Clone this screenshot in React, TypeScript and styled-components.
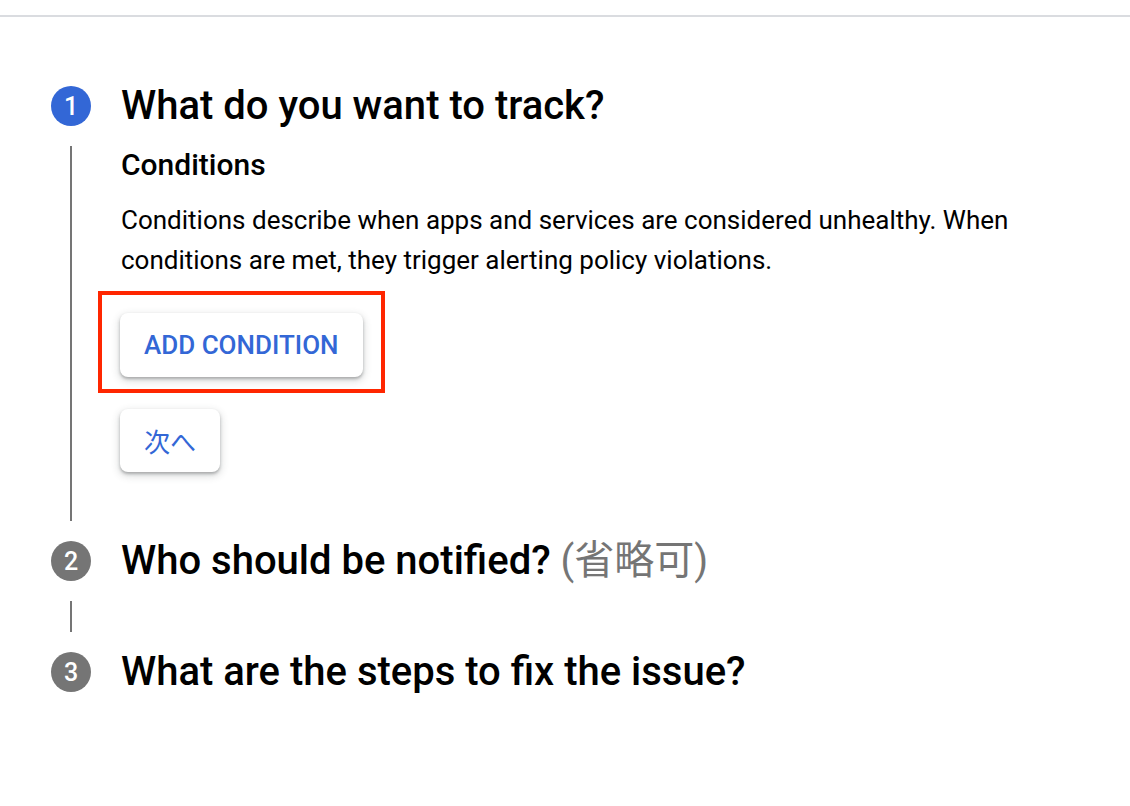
import React from "react";
import styled, { createGlobalStyle } from "styled-components";

const Global = createGlobalStyle`
  html, body { margin: 0; padding: 0; background: #ffffff; }
  body { font-family: Roboto, "Noto Sans CJK JP", "Liberation Sans", sans-serif; color: #000; }
`;

const Page = styled.div`
  width: 1130px;
  min-height: 806px;
  background: #fff;
`;

const TopBar = styled.div`
  height: 15px;
  border-bottom: 2px solid #dadce0;
`;

const Stepper = styled.div`
  display: flex;
  flex-direction: column;
  padding: 69px 0 0 51px;
`;

const Step = styled.div`
  display: grid;
  grid-template-columns: 40px 1fr;
  column-gap: 30px;
`;

const Circle = styled.div<{ $active?: boolean }>`
  width: 40px;
  height: 40px;
  border-radius: 50%;
  background: ${(p) => (p.$active ? "#3367d6" : "#757575")};
  color: #fff;
  font-size: 25px;
  font-weight: 500;
  display: flex;
  align-items: center;
  justify-content: center;
  align-self: center;
`;

const Title = styled.h2`
  margin: 0;
  font-size: 40px;
  font-weight: 500;
  line-height: 40px;
  color: #000;
  white-space: nowrap;
`;

const Optional = styled.span`
  color: #757575;
  font-weight: 400;
`;

const Rail = styled.div`
  display: flex;
  justify-content: center;
  padding: 20px 0 20px;
  &::before {
    content: "";
    width: 2px;
    background: #757575;
  }
`;

const Body = styled.div`
  padding: 21px 0 69px;
  display: flex;
  flex-direction: column;
  align-items: flex-start;
`;

const Spacer = styled.div<{ $h: number }>`
  height: ${(p) => p.$h}px;
`;

const SubTitle = styled.h3`
  margin: 0;
  font-size: 30px;
  font-weight: 500;
  line-height: 36px;
`;

const Text = styled.p`
  margin: 17px 0 0;
  font-size: 26px;
  line-height: 40px;
  color: #000;
  max-width: 900px;
`;

const Highlight = styled.div`
  margin: 11px 0 0 -23px;
  border: 4px solid #ff2600;
  padding: 18px 18px 12px 18px;
`;

const Button = styled.button`
  border: none;
  background: #fff;
  border-radius: 8px;
  height: 64px;
  padding: 0 24px;
  font-family: Roboto, "Noto Sans CJK JP", sans-serif;
  font-size: 26px;
  font-weight: 500;
  color: #3367d6;
  box-shadow: 0 2px 3px rgba(60, 64, 67, 0.35), 0 3px 7px 2px rgba(60, 64, 67, 0.15);
  cursor: pointer;
`;

const NextButton = styled(Button)`
  margin: 16px 0 0 -1px;
  height: 63px;
  width: 100px;
  padding: 0;
  font-weight: 400;
`;

export default function App() {
  return (
    <Page>
      <Global />
      <TopBar />
      <Stepper>
        <Step>
          <Circle $active>1</Circle>
          <Title>What do you want to track?</Title>
          <Rail />
          <Body>
            <SubTitle>Conditions</SubTitle>
            <Text>
              Conditions describe when apps and services are considered unhealthy. When conditions are met, they
              trigger alerting policy violations.
            </Text>
            <Highlight>
              <Button>ADD CONDITION</Button>
            </Highlight>
            <NextButton>次へ</NextButton>
          </Body>
        </Step>
        <Step>
          <Circle>2</Circle>
          <Title>
            Who should be notified? <Optional>(省略可)</Optional>
          </Title>
          <Rail />
          <Spacer $h={71} />
        </Step>
        <Step>
          <Circle>3</Circle>
          <Title>What are the steps to fix the issue?</Title>
        </Step>
      </Stepper>
    </Page>
  );
}
